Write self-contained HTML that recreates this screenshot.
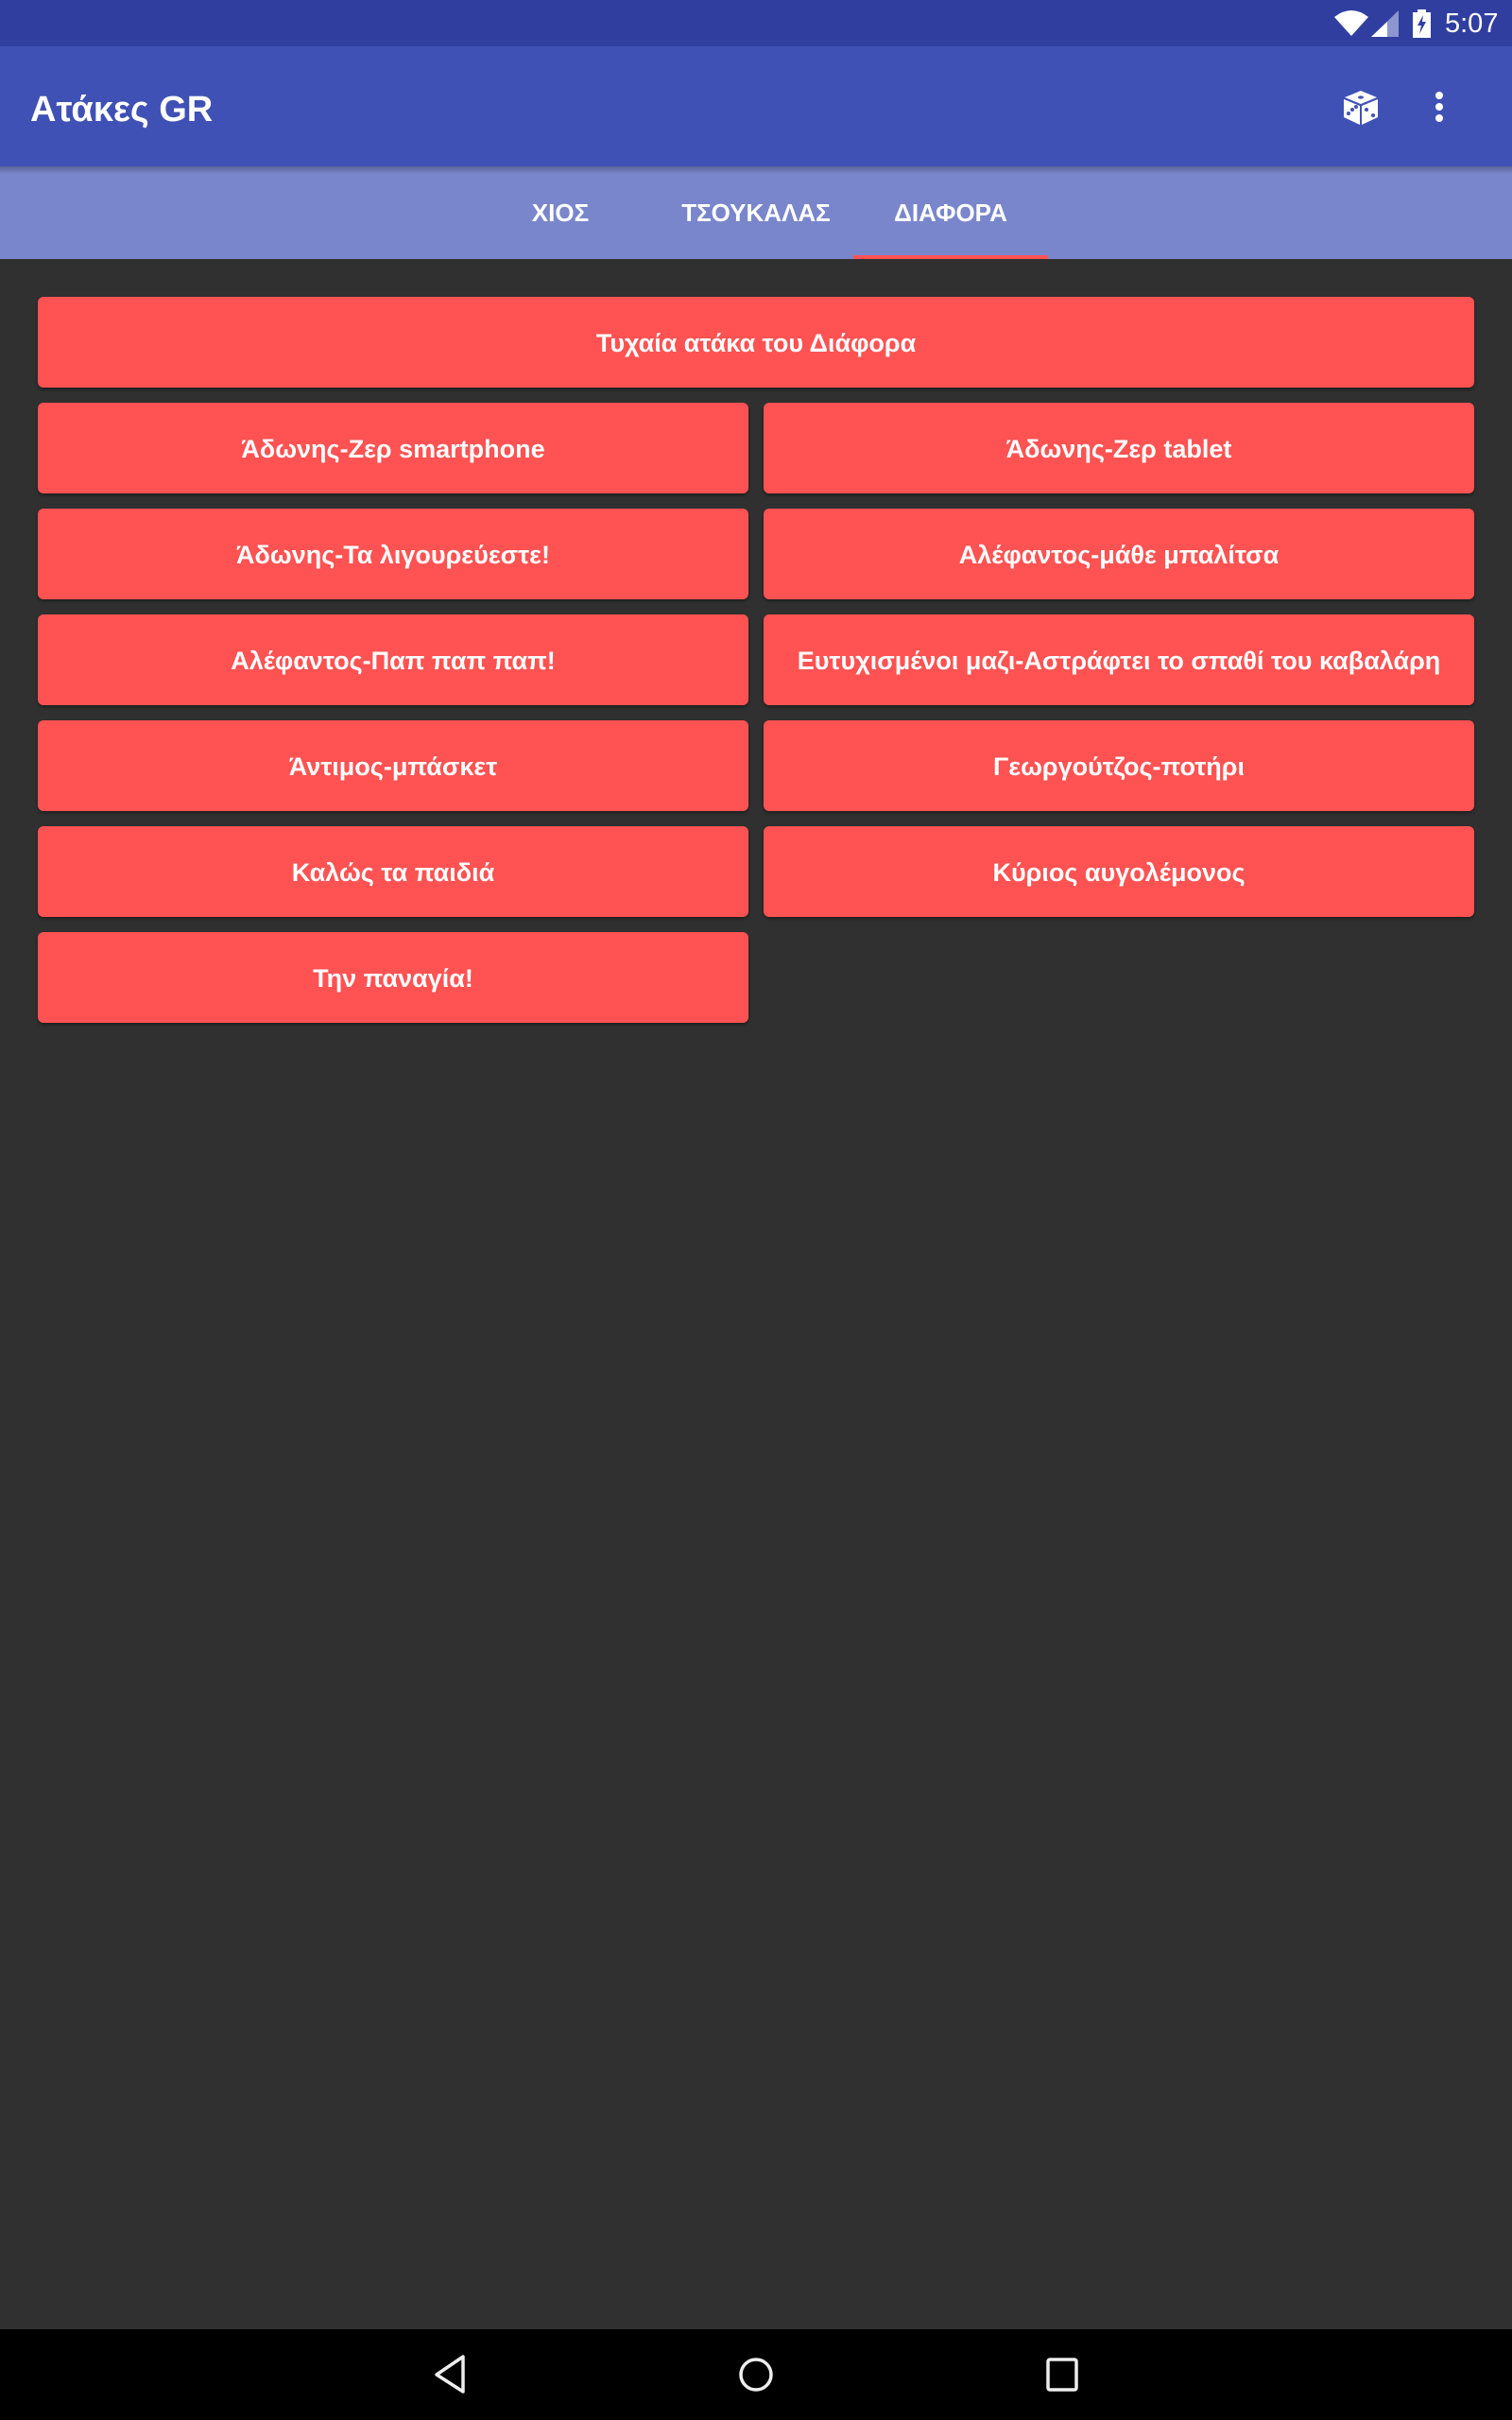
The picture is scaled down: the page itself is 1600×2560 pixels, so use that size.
<!DOCTYPE html>
<html><head><meta charset="utf-8"><style>
*{margin:0;padding:0;box-sizing:border-box}
body{width:1600px;height:2560px;background:#303030;font-family:"Liberation Sans","DejaVu Sans",sans-serif;position:relative;overflow:hidden}
.sb{position:absolute;left:0;top:0;width:1600px;height:49px;background:#303F9F}
.ab{position:absolute;left:0;top:49px;width:1600px;height:127px;background:#3F51B5}
.title{position:absolute;left:32px;top:45px;color:#fff;font-size:38px;font-weight:bold;line-height:44px}
.tb{position:absolute;left:0;top:176px;width:1600px;height:98px;background:#7986CB}
.tb::before{content:"";position:absolute;left:0;top:0;width:100%;height:8px;background:linear-gradient(rgba(0,0,0,.25),rgba(0,0,0,0))}
.tab{position:absolute;top:0;height:98px;line-height:98px;text-align:center;color:#fff;font-size:26px;font-weight:bold;width:206px}
.ind{position:absolute;left:903px;top:270px;width:206px;height:4px;background:#FF5252}
.btn{position:absolute;height:96px;background:#FF5252;border-radius:6px;color:#fff;font-size:27px;font-weight:bold;text-align:center;line-height:98px;box-shadow:0 2px 3px rgba(0,0,0,.4);white-space:nowrap}
.l{left:40px;width:752px}.r{left:808px;width:752px}.f{left:40px;width:1520px}
.nb{position:absolute;left:0;top:2464px;width:1600px;height:96px;background:#000}
.time{position:absolute;left:1529px;top:8px;color:#fff;font-size:29px;line-height:34px}
</style></head><body>
<div class="sb">
<svg style="position:absolute;left:1410px;top:10px" width="40" height="30" viewBox="0 0 40 30"><path d="M2 8 Q20 -6 38 8 L20 28 Z" fill="#fff"/></svg>
<svg style="position:absolute;left:1450px;top:10px" width="32" height="30" viewBox="0 0 32 30"><path d="M30 1 L30 29 L1 29 Z" fill="#8c96d0"/><path d="M18 13 L18 29 L1 29 Z" fill="#fff"/></svg>
<svg style="position:absolute;left:1494px;top:10px" width="22" height="30" viewBox="0 0 22 30"><rect x="6" y="0" width="9" height="3" fill="#fff"/><rect x="1" y="3" width="19" height="27" fill="#fff"/><path d="M12 6 L6 17 L10 17 L8 26 L15 13 L11 13 Z" fill="#303F9F"/></svg>
<div class="time">5:07</div>
</div>
<div class="ab"><div class="title">Ατάκες GR</div>
<svg style="position:absolute;left:1420px;top:45px" width="40" height="40" viewBox="0 0 40 40"><path d="M20 2 L37 9 L20 16 L3 9 Z M2 11 L19 18 L19 38 L2 30 Z M21 18 L38 11 L38 30 L21 38 Z" fill="#fff"/><ellipse cx="20" cy="9" rx="3" ry="1.6" fill="#3F51B5"/><circle cx="7" cy="26" r="2" fill="#3F51B5"/><circle cx="11" cy="22" r="2" fill="#3F51B5"/><circle cx="15" cy="19" r="2" fill="#3F51B5"/><circle cx="26" cy="22" r="2" fill="#3F51B5"/><circle cx="33" cy="28" r="2" fill="#3F51B5"/></svg>
<svg style="position:absolute;left:1515px;top:48px" width="16" height="36" viewBox="0 0 16 36"><circle cx="8" cy="4" r="4" fill="#fff"/><circle cx="8" cy="16" r="4" fill="#fff"/><circle cx="8" cy="28" r="4" fill="#fff"/></svg>
</div>
<div class="tb">
<div class="tab" style="left:490px">ΧΙΟΣ</div>
<div class="tab" style="left:697px">ΤΣΟΥΚΑΛΑΣ</div>
<div class="tab" style="left:903px">ΔΙΑΦΟΡΑ</div>
</div>
<div class="ind"></div>
<div class="btn f" style="top:314px">Τυχαία ατάκα του Διάφορα</div>
<div class="btn l" style="top:426px">Άδωνης-Ζερ smartphone</div>
<div class="btn r" style="top:426px">Άδωνης-Ζερ tablet</div>
<div class="btn l" style="top:538px">Άδωνης-Τα λιγουρεύεστε!</div>
<div class="btn r" style="top:538px">Αλέφαντος-μάθε μπαλίτσα</div>
<div class="btn l" style="top:650px">Αλέφαντος-Παπ παπ παπ!</div>
<div class="btn r" style="top:650px">Ευτυχισμένοι μαζι-Αστράφτει το σπαθί του καβαλάρη</div>
<div class="btn l" style="top:762px">Άντιμος-μπάσκετ</div>
<div class="btn r" style="top:762px">Γεωργούτζος-ποτήρι</div>
<div class="btn l" style="top:874px">Καλώς τα παιδιά</div>
<div class="btn r" style="top:874px">Κύριος αυγολέμονος</div>
<div class="btn l" style="top:986px">Την παναγία!</div>
<div class="nb">
<svg style="position:absolute;left:455px;top:24px" width="42" height="46" viewBox="0 0 42 46"><path d="M35 5 L35 42 L7 24 Z" fill="none" stroke="#eee" stroke-width="3.5" stroke-linejoin="round"/></svg>
<svg style="position:absolute;left:780px;top:28px" width="40" height="40" viewBox="0 0 40 40"><circle cx="20" cy="20" r="16" fill="none" stroke="#eee" stroke-width="3.5"/></svg>
<svg style="position:absolute;left:1105px;top:28px" width="40" height="40" viewBox="0 0 40 40"><rect x="4" y="4" width="30" height="32" rx="2" fill="none" stroke="#eee" stroke-width="3.5"/></svg>
</div>
</body></html>
